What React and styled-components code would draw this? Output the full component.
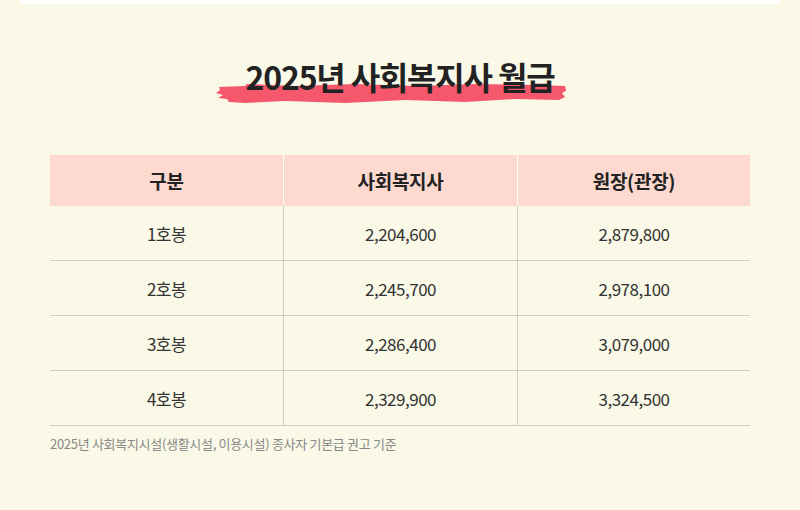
import React from 'react';
import styled, { createGlobalStyle } from 'styled-components';

const Global = createGlobalStyle`
  html, body {
    margin: 0;
    padding: 0;
    background: #faf9e7;
  }
  body {
    font-family: "Noto Sans CJK KR", "Noto Sans", sans-serif;
    color: #222;
  }
`;

const Page = styled.div`
  width: 800px;
  height: 510px;
  background: #faf9e7;
  padding: 0 20px;
  box-sizing: border-box;
`;

const TopBar = styled.div`
  height: 4px;
  background: #ffffff;
`;

const Section = styled.section`
  padding: 52px 30px 0;
`;

const TitleWrap = styled.div`
  display: flex;
  justify-content: center;
  margin-bottom: 59px;
`;

const Title = styled.h2`
  position: relative;
  margin: 0;
  font-size: 32px;
  font-weight: 700;
  letter-spacing: -1.2px;
  line-height: 40px;
  color: #222;
`;

const TitleText = styled.span`
  position: relative;
  z-index: 1;
`;

const Brush = styled.svg`
  position: absolute;
  left: -31px;
  top: 27px;
  width: 352px;
  height: 21px;
`;

const Table = styled.div`
  display: grid;
  grid-template-columns: 233px 234px 233px;
`;

const Head = styled.div`
  height: 51px;
  display: flex;
  align-items: center;
  justify-content: center;
  background: #fdd9cf;
  font-size: 19px;
  font-weight: 700;
  letter-spacing: -0.3px;
  color: #222;
  border-left: ${p => (p.$first ? 'none' : '1px solid #fff')};
`;

const Cell = styled.div`
  height: 54px;
  display: flex;
  align-items: center;
  justify-content: center;
  font-size: 17px;
  color: #333;
  letter-spacing: -0.5px;
  border-bottom: 1px solid #cfcdbd;
  border-left: ${p => (p.$first ? 'none' : '1px solid #cfcdbd')};
`;

const Note = styled.p`
  margin: 8px 0 0;
  font-size: 13px;
  line-height: 19px;
  color: #888;
  letter-spacing: -0.3px;
`;

const rows = [
  ['1호봉', '2,204,600', '2,879,800'],
  ['2호봉', '2,245,700', '2,978,100'],
  ['3호봉', '2,286,400', '3,079,000'],
  ['4호봉', '2,329,900', '3,324,500'],
];

const App = () => (
  <Page>
    <Global />
    <TopBar />
    <Section>
      <TitleWrap>
        <Title>
          <Brush viewBox="0 0 352 21" preserveAspectRatio="none">
            <path
              d="M4 4 L30 3 L32 1 L80 3 L140 1 L200 3 L260 1 L320 2 L350 3 L351 8 L347 10 L350 14 L344 17 L300 16 L250 19 L190 17 L130 20 L70 18 L30 20 L14 19 L12 16 L3 15 L8 12 L1 10 L5 7 Z"
              fill="#f5586d"
            />
          </Brush>
          <TitleText>2025년 사회복지사 월급</TitleText>
        </Title>
      </TitleWrap>
      <Table>
        <Head $first>구분</Head>
        <Head>사회복지사</Head>
        <Head>원장(관장)</Head>
        {rows.map(r =>
          r.map((v, i) => (
            <Cell key={r[0] + i} $first={i === 0}>{v}</Cell>
          ))
        )}
      </Table>
      <Note>2025년 사회복지시설(생활시설, 이용시설) 종사자 기본급 권고 기준</Note>
    </Section>
  </Page>
);

export default App;
